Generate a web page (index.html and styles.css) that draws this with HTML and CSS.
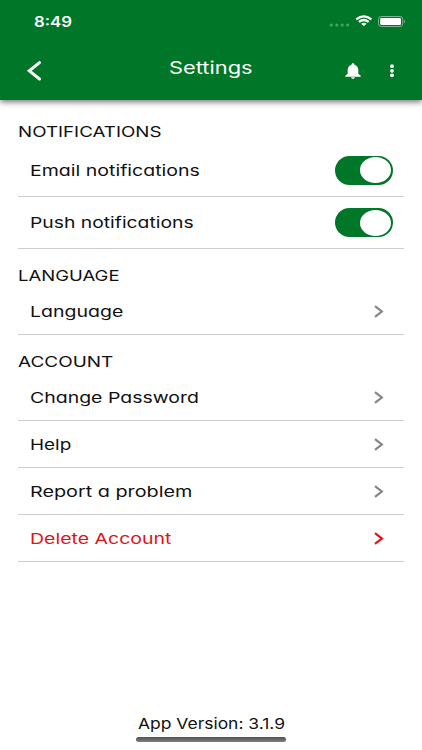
FILE: index.html
```
<!DOCTYPE html>
<html lang="en">
<head>
<meta charset="utf-8">
<title>Settings</title>
<link rel="stylesheet" href="styles.css">
</head>
<body>
<div class="screen">
  <header class="header">
    <div class="status">
      <span class="time t">8:49</span>
      <svg class="status-icons" width="76" height="14" viewBox="0 0 76 14">
        <g fill="#4d9f68"><circle cx="2.3" cy="11" r="1.6"/><circle cx="7.8" cy="11" r="1.6"/><circle cx="13.2" cy="11" r="1.6"/><circle cx="18.6" cy="11" r="1.6"/></g>
        <g transform="translate(34.8 0)" fill="none" stroke="#fff" stroke-width="2.2">
          <path d="M-7.6 5.4Q0 -0.7 7.600 5.400"/><path d="M-4.900 7.900Q0 4.100 4.900 7.900"/><path d="M-2.800 9.700Q0 7.800 2.800 9.700L0 12.100Z" fill="#fff" stroke="none"/>
        </g>
        <rect x="49.5" y="2.500" width="24.200" height="10" rx="2.800" fill="none" stroke="#7bb78e"/>
        <rect x="51.2" y="4" width="20.8" height="7" rx="1.2" fill="#fff"/>
        <path d="M75 5.6q1.5 1.9 0 3.8z" fill="#9bc9a9"/>
      </svg>
    </div>
    <div class="toolbar">
      <svg class="back" width="16" height="22" viewBox="0 0 16 22"><path d="M13.500 2.600L3.300 10.800L13.500 19" fill="none" stroke="#fff" stroke-width="3" stroke-linecap="round" stroke-linejoin="miter"/></svg>
      <h1 class="title t">Settings</h1>
      <svg class="bell" width="16" height="16" viewBox="0 0 16 16" fill="#fff"><path d="M8 .3c.9 0 1.4.6 1.4 1.4C12 2.400 13.300 4.400 13.300 7v3.800l2.400 2v1H.3v-1l2.400-2V7c0-2.600 1.300-4.600 3.900-5.300C6.600.9 7.100.3 8 .3zM6 14.300h4c0 .9-.9 1.500-2 1.500s-2-.6-2-1.500z"/></svg>
      <svg class="dots" width="6" height="14" viewBox="0 0 6 14" fill="#fff"><circle cx="3" cy="2.200" r="1.900"/><circle cx="3" cy="6.800" r="1.900"/><circle cx="3" cy="11.300" r="1.900"/></svg>
    </div>
  </header>
  <main class="content">
    <section>
      <h2><span class="t notifications">NOTIFICATIONS</span></h2>
      <div class="row toggle-row first"><span class="t email">Email notifications</span><span class="switch"><span class="knob"></span></span></div>
      <div class="row toggle-row"><span class="t push">Push notifications</span><span class="switch"><span class="knob"></span></span></div>
    </section>
    <section>
      <h2><span class="t lang-head">LANGUAGE</span></h2>
      <div class="row"><span class="t lang">Language</span><svg class="chevron" width="10" height="13" viewBox="0 0 10 13"><path d="M1 1.200L7.800 6.500L1 11.800"/></svg></div>
    </section>
    <section>
      <h2><span class="t account">ACCOUNT</span></h2>
      <div class="row"><span class="t password">Change Password</span><svg class="chevron" width="10" height="13" viewBox="0 0 10 13"><path d="M1 1.200L7.800 6.500L1 11.800"/></svg></div>
      <div class="row"><span class="t help">Help</span><svg class="chevron" width="10" height="13" viewBox="0 0 10 13"><path d="M1 1.200L7.800 6.500L1 11.800"/></svg></div>
      <div class="row"><span class="t report">Report a problem</span><svg class="chevron" width="10" height="13" viewBox="0 0 10 13"><path d="M1 1.200L7.800 6.500L1 11.800"/></svg></div>
      <div class="row danger"><span class="t delete">Delete Account</span><svg class="chevron" width="10" height="13" viewBox="0 0 10 13"><path d="M1 1.200L7.800 6.500L1 11.800"/></svg></div>
    </section>
  </main>
  <footer class="footer">
    <span class="t version">App Version: 3.1.9</span>
    <div class="home-bar"></div>
  </footer>
</div>
</body>
</html>
```
FILE: styles.css
```
* { box-sizing: border-box; }
body { margin: 0; background: #fff; color: #111; font-family: Inter, "Liberation Sans", sans-serif; font-feature-settings: "cv11"; font-size: 15px; }
h1, h2 { margin: 0; font-size: 15px; font-weight: 400; }
.t { display: inline-block; white-space: nowrap; line-height: 20px; transform: scaleX(var(--stretch, 1.2)); transform-origin: left center; }
.notifications { --stretch: 1.25; }
.email { --stretch: 1.302; }
.push { --stretch: 1.287; }
.lang-head { --stretch: 1.235; }
.lang { --stretch: 1.3; }
.account { --stretch: 1.265; }
.password { --stretch: 1.298; }
.help { --stretch: 1.26; }
.report { --stretch: 1.32; }
.delete { --stretch: 1.3; }
.version { --stretch: 1.163; }
.screen { width: 422px; height: 750px; display: flex; flex-direction: column; overflow: hidden; }
.header { height: 100px; background: #007728; color: #fff; box-shadow: 0 2px 6px rgba(0, 0, 0, .55); }
.status { height: 42px; padding: 12px 17px 0 34px; display: flex; justify-content: space-between; align-items: flex-start; }
.time { font-size: 14px; font-weight: 600; }
.status-icons { margin-top: 2px; }
.toolbar { height: 58px; display: flex; align-items: center; padding: 0 27px 0 26px; }
.title { --stretch: 1.285; margin: -7px 0 0 127px; font-size: 17px; }
.bell { margin-left: auto; }
.dots { margin-left: 28px; }
.content { padding: 0 18px; }
h2 { height: 53px; padding-top: 22px; }
section + section h2 { height: 39px; padding-top: 17px; }
.row { height: 47px; border-bottom: 1px solid #cdcdd1; padding: 0 20.5px 0 11.5px; display: flex; justify-content: space-between; align-items: center; }
.row .t { padding-top: 1px; }
.toggle-row { height: 52px; padding-right: 11px; }
.toggle-row.first { height: 44px; padding-bottom: 9px; }
.switch { width: 58px; height: 29px; border-radius: 15px; background: #007728; display: flex; justify-content: flex-end; padding: 1.5px 2px; }
.knob { width: 31px; height: 26px; border-radius: 50%; background: #fff; }
.chevron { fill: none; stroke: #858585; stroke-width: 2.2; }
.danger { color: #e01418; }
.danger .chevron { stroke: #e01418; }
.footer { margin-top: auto; height: 36px; display: flex; flex-direction: column; padding-left: 138px; align-items: flex-start; }
.home-bar { width: 150px; height: 5px; margin: 3px 0 0 -2px; border-radius: 3px; background: linear-gradient(#505050, #808080); }
```
